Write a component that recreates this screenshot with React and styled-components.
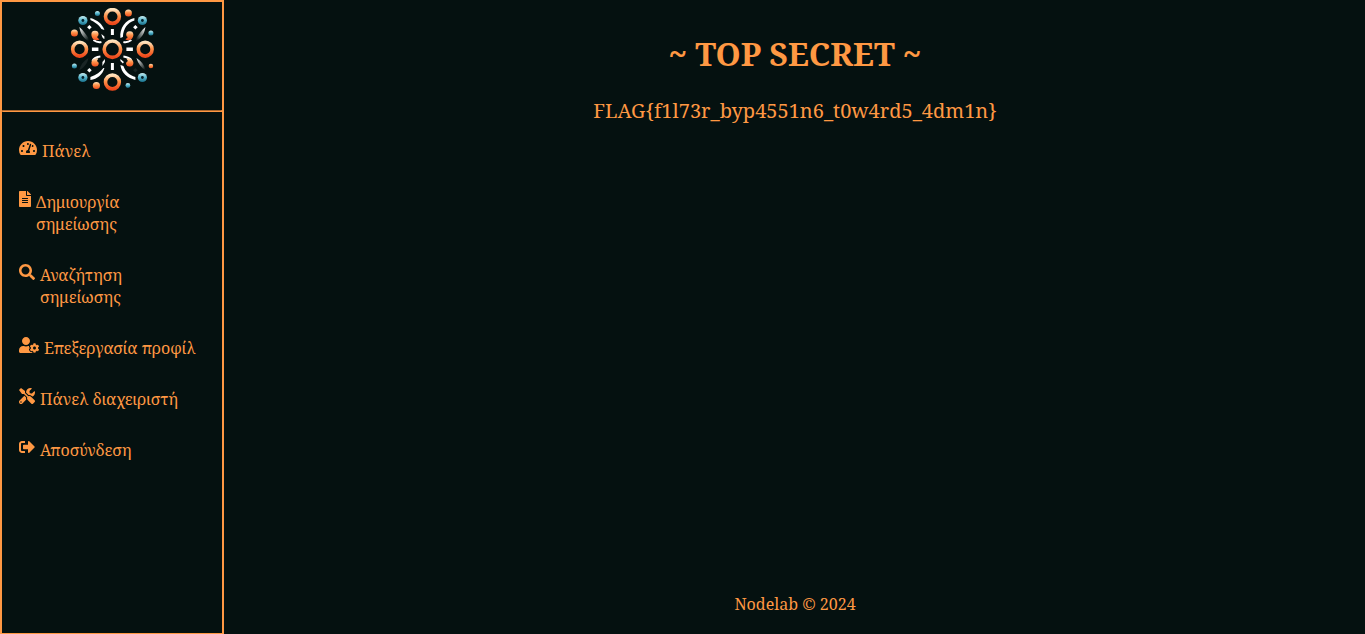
import React from "react";
import styled, { createGlobalStyle } from "styled-components";
import { FaTachometerAlt, FaFileAlt, FaSearch, FaUserCog, FaTools, FaSignOutAlt } from "react-icons/fa";

const GlobalStyle = createGlobalStyle`
  *, *::before, *::after { box-sizing: border-box; }
  body {
    margin: 0;
    background: #051110;
    color: #ff9843;
    font-family: "Noto Serif", "Droid Serif", "DejaVu Serif", serif;
    font-size: 16px;
    line-height: 22px;
  }
`;

const Page = styled.div`
  display: flex;
  gap: 1px;
  min-height: 100vh;
`;

const Sidebar = styled.aside`
  flex: 0 0 224px;
  border: 2px solid #ff9843;
  border-bottom-width: 1px;
`;

const Brand = styled.a`
  display: flex;
  justify-content: center;
  height: 108px;
  padding-top: 6px;
`;

const Divider = styled.hr`
  margin: 0;
  border: 1px inset #ff9843;
`;

const Menu = styled.ul`
  display: flex;
  flex-direction: column;
  gap: 29px;
  margin: 0;
  padding: 28px 22px 28px 17px;
  list-style: none;
`;

const MenuLink = styled.a`
  display: flex;
  align-items: flex-start;
  gap: 5px;
  color: inherit;
  text-decoration: none;

  svg {
    flex: none;
    width: ${({ $iconWidth }) => $iconWidth}px;
    height: 16px;
  }
`;

const Main = styled.main`
  flex: 1;
  display: flex;
  flex-direction: column;
  align-items: center;
  text-align: center;
`;

const Title = styled.h1`
  margin: 32px 0 24px;
  font-size: 32px;
  line-height: 44px;
`;

const Flag = styled.p`
  margin: 0;
  font-size: 20px;
`;

const Footer = styled.footer`
  margin-top: auto;
  padding-bottom: 19px;
`;

const items = [
  { icon: FaTachometerAlt, width: 18, label: "Πάνελ" },
  { icon: FaFileAlt, width: 12, label: "Δημιουργία σημείωσης" },
  { icon: FaSearch, width: 16, label: "Αναζήτηση σημείωσης" },
  { icon: FaUserCog, width: 20, label: "Επεξεργασία προφίλ" },
  { icon: FaTools, width: 16, label: "Πάνελ διαχειριστή" },
  { icon: FaSignOutAlt, width: 16, label: "Αποσύνδεση" },
];

const rings = [
  [42, 8.5, 6.9], [9.2, 41.2, 6.9], [74.8, 41.2, 6.9], [42, 74, 6.9], [42, 41.2, 8.2],
];

const dots = [
  [58, 5, 3.5, "o"], [4, 25, 3.5, "o"], [26, 77.5, 3.6, "o"], [80.5, 58, 2.3, "o"],
  [27, 5.5, 2.5, "b"], [80.5, 25, 2.5, "b"], [4, 58, 2.5, "b"], [57.5, 77.5, 2.4, "b"],
];

const eyes = [[12.5, 12.5], [72, 12.5], [12.5, 69.5], [72, 69.5]];

function Logo() {
  return (
    <svg width="84" height="84" viewBox="-0.4 0 84 84" role="img" aria-label="Nodelab">
      <defs>
        <linearGradient id="orange" x1="0" y1="0" x2="0" y2="1">
          <stop offset="0" stopColor="#ffe3bd" />
          <stop offset="0.45" stopColor="#ff9148" />
          <stop offset="1" stopColor="#ef4a1c" />
        </linearGradient>
        <linearGradient id="blue" x1="0" y1="0" x2="0" y2="1">
          <stop offset="0" stopColor="#c9eef2" />
          <stop offset="0.5" stopColor="#55b4cb" />
          <stop offset="1" stopColor="#176d87" />
        </linearGradient>
        <linearGradient id="fade" x1="0" y1="0" x2="1" y2="1">
          <stop offset="0" stopColor="#fff" />
          <stop offset="0.9" stopColor="#172322" />
        </linearGradient>
        <linearGradient id="fadeLeft" x1="1" y1="0" x2="0" y2="1">
          <stop offset="0" stopColor="#fff" />
          <stop offset="0.9" stopColor="#172322" />
        </linearGradient>
      </defs>
      {rings.map(([x, y, r]) => (
        <circle key={`${x}-${y}`} cx={x} cy={y} r={r} fill="none" stroke="url(#orange)" strokeWidth="3.6" />
      ))}
      {dots.map(([x, y, r, tone]) => (
        <circle key={`${x}-${y}`} cx={x} cy={y} r={r} fill={tone === "o" ? "url(#orange)" : "url(#blue)"} />
      ))}
      {eyes.map(([x, y]) => (
        <g key={`${x}-${y}`}>
          <circle cx={x} cy={y} r="4.6" fill="url(#blue)" />
          <circle cx={x} cy={y} r="1.4" fill="#04202b" />
        </g>
      ))}
      <g fill="#fff">
        <path d="M40.5 21h3v6h-3zM40.5 55h3v7h-3zM21.500 39.500h6.500v3.500h-6.500zM56 39.500h6.500v3.500h-6.500z" />
        <path d="M20 10C27 12 32 16 34 22L31 21C28 16 24 14 20 12Z" />
        <path d="M64 10v2.500C57 15 53 20 52.500 29L50 30C49 20 55 12 64 10Z" />
        <path d="M20 72v-3C26 67 30 64 33 60h1C32 67 27 71 20 72Z" />
        <path d="M50 57l3 1C55 64 59 67 65 69v3C57 70 51 65 50 57Z" />
        <path d="M19 17l2.300 2.300L19 21.600 16.700 19.300zM65 17l2.300 2.300L65 21.600 62.700 19.300zM19 60l2.300 2.300L19 64.600 16.700 62.300z" />
        <path d="M31 26l3 2.500v2.500c-1.500-.5-2.500-2-3-5ZM34.500 51v3l-2.500 4v-4ZM50 51l3.500 3-1 1.500-2.500-2.500Z" />
      </g>
      <path d="M65 60l2.300 2.300L65 64.600 62.700 62.300z" fill="#172322" />
      <path d="M9 19C10 26 13 30 18 33V30C15 26 13 22 9 19Z" fill="url(#fade)" />
      <path d="M75 19C74 26 71 30 66 33V30C69 26 71 22 75 19Z" fill="url(#fadeLeft)" />
      <path d="M66 50C71 53 74 57 75 62C71 60 68 56 66 50Z" fill="url(#fade)" />
      <path d="M18 50C13 53 10 57 9 62C13 60 17 56 18 50Z" fill="#1a2525" />
      <g fill="none" stroke="#fff" strokeWidth="2">
        <path d="M23 32q4 3 8 2M61 32q-4 3-8 2M22 53q2-4 8-4.500M61 52q-3-3-8-3.500" />
      </g>
      <g fill="url(#orange)">
        <path d="M21 26.500a3.600 3.600 0 0 1 7.200-.5Q28 28.500 26.500 29L29 31.500C25 33.500 21 31 21 26.500Z" />
        <path d="M63 26.500a3.600 3.600 0 1 0-7.200.5Q56 29 57.500 29L55 31.500C59 33.500 63 31 63 26.500Z" />
        <path d="M21 55a3.800 3.800 0 0 0 7.400 1Q28.500 54 26.500 53L28 50.500C24 49.500 21 52 21 55Z" />
        <path d="M63 55a3.800 3.800 0 0 1-7.400 1Q55.500 54 57.500 53L56 50.500C60 49.500 63 52 63 55Z" />
      </g>
    </svg>
  );
}

export default function App() {
  return (
    <>
      <GlobalStyle />
      <Page>
        <Sidebar>
          <Brand href="#">
            <Logo />
          </Brand>
          <Divider />
          <nav>
            <Menu>
              {items.map(({ icon: Icon, width, label }) => (
                <li key={label}>
                  <MenuLink href="#" $iconWidth={width}>
                    <Icon aria-hidden="true" />
                    <span>{label}</span>
                  </MenuLink>
                </li>
              ))}
            </Menu>
          </nav>
        </Sidebar>
        <Main>
          <Title>~ TOP SECRET ~</Title>
          <Flag>FLAG&#123;f1l73r_byp4551n6_t0w4rd5_4dm1n&#125;</Flag>
          <Footer>Nodelab © 2024</Footer>
        </Main>
      </Page>
    </>
  );
}
